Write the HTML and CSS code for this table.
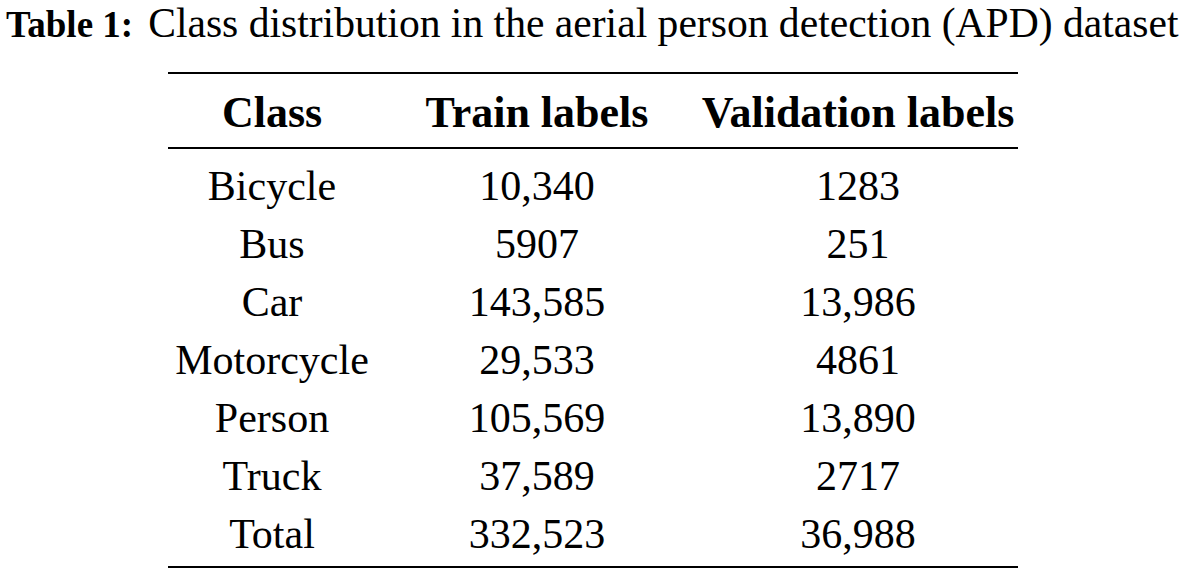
FILE: index.html
```html
<!DOCTYPE html>
<html lang="en">
<head>
<meta charset="utf-8">
<title>Table 1</title>
<link rel="stylesheet" href="styles.css">
</head>
<body>
<div class="page">
  <p class="caption"><span class="label">Table 1:</span><span class="title">Class distribution in the aerial person detection (APD) dataset</span></p>
  <table class="data">
    <colgroup>
      <col class="c1"><col class="c2"><col class="c3">
    </colgroup>
    <thead>
      <tr><th>Class</th><th>Train labels</th><th>Validation labels</th></tr>
    </thead>
    <tbody>
      <tr class="first"><td>Bicycle</td><td>10,340</td><td>1283</td></tr>
      <tr><td>Bus</td><td>5907</td><td>251</td></tr>
      <tr><td>Car</td><td>143,585</td><td>13,986</td></tr>
      <tr><td>Motorcycle</td><td>29,533</td><td>4861</td></tr>
      <tr><td>Person</td><td>105,569</td><td>13,890</td></tr>
      <tr><td>Truck</td><td>37,589</td><td>2717</td></tr>
      <tr class="last"><td>Total</td><td>332,523</td><td>36,988</td></tr>
    </tbody>
  </table>
</div>
</body>
</html>
```

FILE: styles.css
```css
html, body {
  margin: 0;
  padding: 0;
  background: #fff;
}
.page {
  width: 1188px;
  font-family: "Liberation Serif", "Times New Roman", serif;
  color: #000;
}
.caption {
  margin: 0;
  padding-left: 6px;
  font-size: 41.6px;
  line-height: 46px;
  height: 46px;
  white-space: nowrap;
}
.caption .label {
  font-weight: bold;
  font-size: 37px;
  margin-right: 15px;
}
.data {
  margin-left: 168px;
  margin-top: 26px;
  border-collapse: collapse;
  table-layout: fixed;
  width: 850px;
  font-size: 42px;
}
.c1 { width: 208px; }
.c2 { width: 322px; }
.c3 { width: 320px; }
.data th, .data td {
  padding: 0;
  text-align: center;
  line-height: 58px;
  height: 58px;
  white-space: nowrap;
}
.data thead tr {
  border-top: 2.5px solid #000;
  border-bottom: 2.5px solid #000;
}
.data thead th {
  font-weight: bold;
  font-size: 44px;
  padding-top: 10px;
  padding-bottom: 5px;
}
.data tbody tr.first td {
  padding-top: 8px;
}
.data tbody tr.last {
  border-bottom: 2.5px solid #000;
}
.data tbody tr.last td {
  padding-bottom: 3px;
}
```
